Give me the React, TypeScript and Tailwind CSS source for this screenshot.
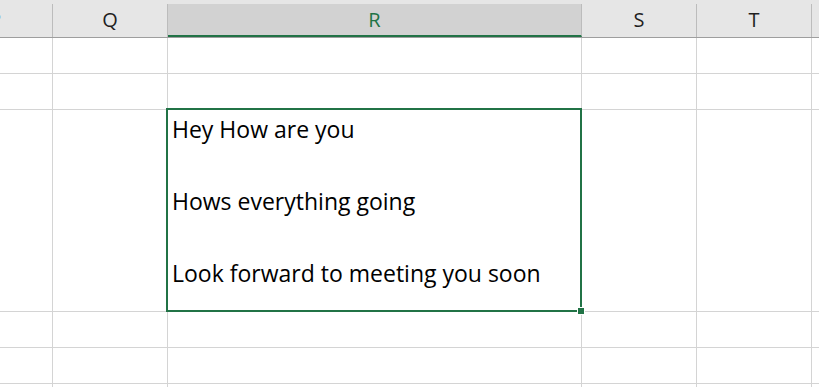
const cols = [
  { id: "P", w: "w-[115px] -ml-[62px]" },
  { id: "Q", w: "w-[115px]" },
  { id: "R", w: "w-[414px]" },
  { id: "S", w: "w-[115px]" },
  { id: "T", w: "w-[115px]" },
  { id: "U", w: "w-[115px]" },
];

const rows = [
  { n: 1, h: "h-[36px]" },
  { n: 2, h: "h-[36px]" },
  { n: 3, h: "h-[202px]" },
  { n: 4, h: "h-[36px]" },
  { n: 5, h: "h-[36px]" },
  { n: 6, h: "h-[36px]" },
];

const HeaderRow = () => (
  <div className="flex h-[38px] border-b border-[#9e9e9e] bg-[#e6e6e6]">
    {cols.map((c) =>
      c.id === "R" ? (
        <div key={c.id} className={`${c.w} shrink-0 pt-[4px] h-full`}>
          <div className="h-full bg-[#d2d2d2] border-r border-[#bcbcbc] border-b-2 border-b-[#217346] flex items-center justify-center text-[#217346] text-[20px] leading-none">
            R
          </div>
        </div>
      ) : (
        <div key={c.id} className={`${c.w} shrink-0 pt-[4px] h-full`}>
          <div className="h-full border-r border-[#bcbcbc] flex items-center justify-center text-[#1f1f1f] text-[20px] leading-none pb-[1px]">
            {c.id}
          </div>
        </div>
      )
    )}
  </div>
);

const Selection = () => (
  <div className="absolute -left-[2px] -top-[2px] -right-[1px] -bottom-[1px] border-2 border-[#217346]">
    <div className="absolute -right-[4px] -bottom-[4px] w-[6px] h-[6px] bg-[#217346] outline outline-1 outline-white" />
  </div>
);

export default function App() {
  return (
    <div
      className="w-[819px] h-[387px] overflow-hidden bg-white"
      style={{ fontFamily: '"Open Sans", "Noto Sans", sans-serif' }}
    >
      <HeaderRow />
      {rows.map((r) => (
        <div key={r.n} className={`flex ${r.h} shrink-0`}>
          {cols.map((c) => (
            <div
              key={c.id}
              className={`${c.w} shrink-0 h-full border-r border-b border-[#d4d4d4] ${
                r.n === 3 && c.id === "R" ? "relative z-10" : ""
              }`}
            >
              {r.n === 3 && c.id === "R" && (
                <>
                  <div className="pl-[4px] pt-[1px] text-[23px] leading-[36px] text-black">
                    <div>Hey How are you</div>
                    <div>&nbsp;</div>
                    <div>Hows everything going</div>
                    <div>&nbsp;</div>
                    <div>Look forward to meeting you soon</div>
                  </div>
                  <Selection />
                </>
              )}
            </div>
          ))}
        </div>
      ))}
    </div>
  );
}
